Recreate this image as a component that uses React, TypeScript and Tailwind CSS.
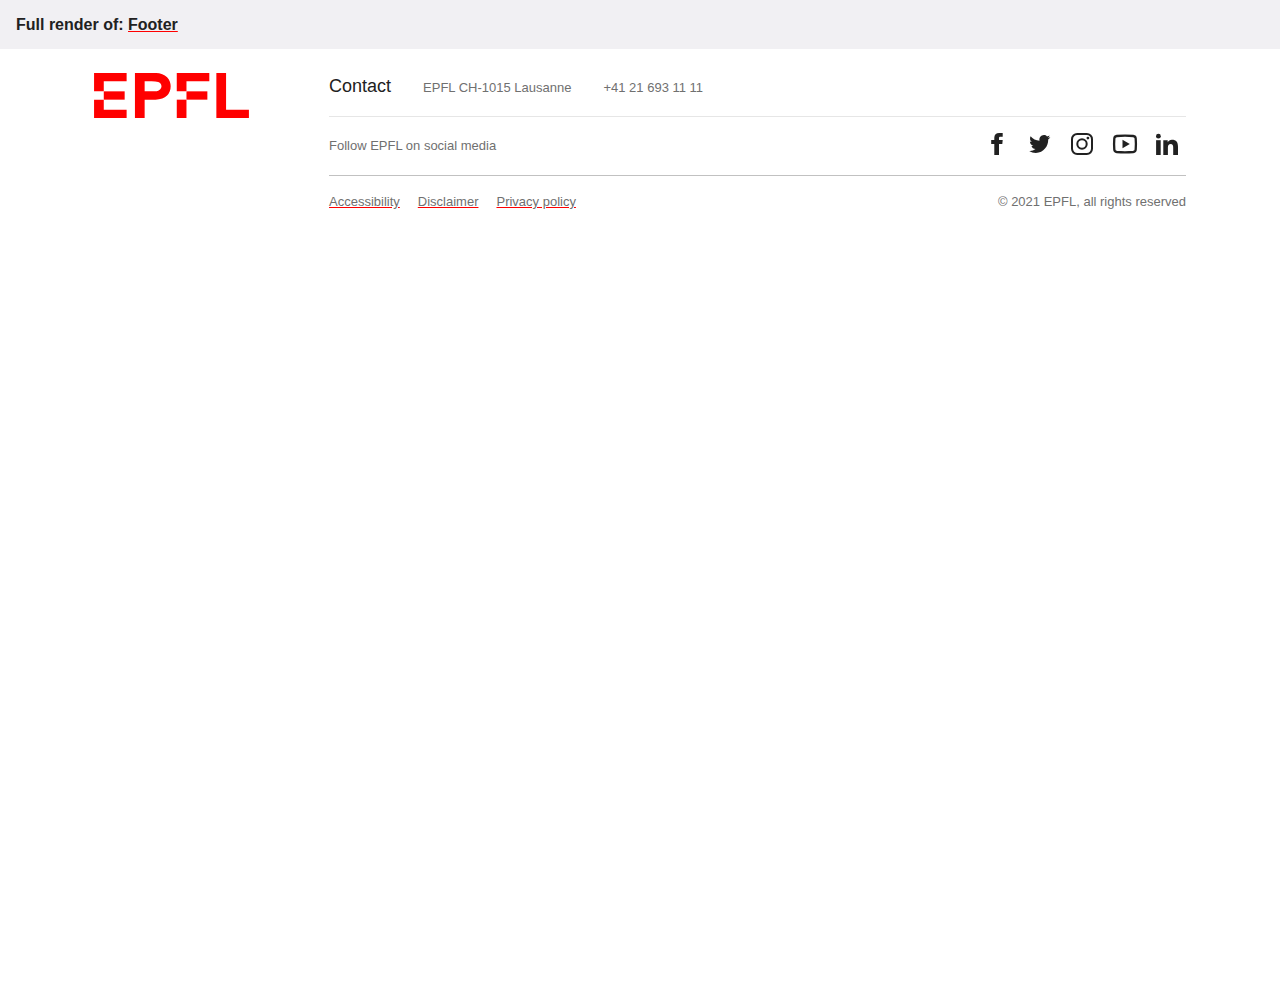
import type { ReactNode } from "react";

const contactItems = ["EPFL CH-1015 Lausanne", "+41 21 693 11 11"];
const legalLinks = ["Accessibility", "Disclaimer", "Privacy policy"];

function Logo() {
  return (
    <svg viewBox="0 0 182.4 53" className="w-[155px] h-[45px] fill-[#ff0000]" aria-hidden="true">
      <path d="M0 21.6H11.43V9.8H38.34V0H0z" />
      <path d="M0 53H38.34V43.2H11.43V31.4H0z" />
      <path d="M11.43 21.6h24.61v9.8H11.43z" />
      <path d="M86,4.87a16.12,16.12,0,0,0-5.68-3.53A23.76,23.76,0,0,0,71.82,0H48.14V53H59.57V31.4H71.82a23.76,23.76,0,0,0,8.46-1.34A16.12,16.12,0,0,0,86,26.53a13.43,13.43,0,0,0,3.19-5,17.38,17.38,0,0,0,0-11.62A13.52,13.52,0,0,0,86,4.87ZM78,19.2a6,6,0,0,1-2.42,1.58,14.85,14.85,0,0,1-3.51.69q-2,.13-4.19.13H59.57V9.8h8.27q2.22,0,4.19.13a14.31,14.31,0,0,1,3.51.7A5.79,5.79,0,0,1,78,12.2a5.55,5.55,0,0,1,0,7Z" />
      <path d="M97.4 21.6H108.83V9.8H135.74V0H97.4z" />
      <path d="M97.4 31.4h11.43V53H97.4z" />
      <path d="M108.83 21.6h24.61v9.8h-24.61z" />
      <path d="M155.47 0H144.04V53H182.38V43.2H155.47z" />
    </svg>
  );
}

const socials: { name: string; icon: ReactNode }[] = [
  {
    name: "Facebook",
    icon: (
      <svg viewBox="0 0 26 24" className="w-[26px] h-6 fill-current" aria-hidden="true">
        <path d="M18.7 1.100v3.700h-2.200c-1.300 0-1.500.5-1.500 1.500v1.800h3.700l-.4 3.900H15V23h-4.700V12H7.200V8.100h3.100V5.800C10.300 2.800 12 1 15.200 1z" />
      </svg>
    ),
  },
  {
    name: "Twitter",
    icon: (
      <svg viewBox="0 0 24 24" className="w-6 h-6 fill-current" aria-hidden="true">
        <path d="M22.3 5.2c-.6.9-1.3 1.6-2.1 2.2v.6c0 5.8-4.3 12.9-12.4 12.9-2.4 0-4.7-.7-6.6-2 2.3.2 4.5-.4 6.3-1.8-1.900 0-3.500-1.300-4-3.100.7.1 1.300.1 1.900-.1-2-.4-3.500-2.200-3.500-4.300.6.3 1.300.5 2 .5C2 8.900 1.500 6.200 2.600 4.200c2.200 2.600 5.300 4.300 8.900 4.500C10.900 5.900 13 3.100 15.900 3.100c1.200 0 2.400.5 3.100 1.300 1-.2 1.900-.5 2.700-1-.3 1-1 1.800-1.900 2.300.9-.1 1.700-.2 2.500-.5z" />
      </svg>
    ),
  },
  {
    name: "Instagram",
    icon: (
      <svg viewBox="0 0 24 24" className="w-6 h-6 fill-none stroke-current" aria-hidden="true">
        <rect x="2" y="2" width="20" height="20" rx="5.2" strokeWidth="2" />
        <circle cx="12" cy="12" r="4.7" strokeWidth="2" />
        <circle cx="17.9" cy="6.1" r="1.4" className="fill-current" stroke="none" />
      </svg>
    ),
  },
  {
    name: "YouTube",
    icon: (
      <svg viewBox="0 0 26 24" className="w-[26px] h-6 fill-none stroke-current" aria-hidden="true">
        <path
          d="M13 3.7c3 0 6 .1 8.2.3 1.500.2 2.400 1 2.500 2.500.3 3.700.3 7.300 0 11-.1 1.500-1 2.300-2.500 2.500-5.500.4-10.900.4-16.400 0-1.500-.2-2.400-1-2.500-2.500-.3-3.700-.3-7.300 0-11C2.400 5 3.300 4.200 4.800 4c2.200-.2 5.200-.3 8.200-.3z"
          strokeWidth="2.3"
        />
        <path d="M10.5 7.8v8.400l7.300-4.200z" className="fill-current" stroke="none" />
      </svg>
    ),
  },
  {
    name: "LinkedIn",
    icon: (
      <svg viewBox="0 0 22 24" className="w-[22px] h-6 fill-current" aria-hidden="true">
        <circle cx="2.4" cy="4.2" r="2.4" />
        <path d="M.1 8.200h4.600V23H.1z" />
        <path d="M7.300 8.200h4.400v2c.8-1.400 2.200-2.400 4.200-2.400 4.400 0 6.100 2.600 6.100 7V23h-4.800v-7.300c0-2.200-.6-3.600-2.500-3.600-2 0-2.800 1.400-2.800 3.600V23H7.300z" />
      </svg>
    ),
  },
];

export default function App() {
  return (
    <div className="font-['Liberation_Sans',Arial,sans-serif] text-[13px] leading-5 text-[#707070]">
      <header className="bg-[#f1f0f3] px-4 pt-[13px] pb-3">
        <h1 className="text-base leading-6 font-bold text-[#212121]">
          Full render of:{" "}
          <a href="#footer" className="underline decoration-[#ff0000] underline-offset-1">
            Footer
          </a>
        </h1>
      </header>

      <footer id="footer" className="mx-auto flex max-w-[1140px] px-6 pt-6">
        <div className="w-[235px] shrink-0">
          <a href="#home" aria-label="EPFL home" className="inline-block">
            <Logo />
          </a>
        </div>

        <div className="min-w-0 flex-1">
          <address className="flex flex-wrap items-baseline gap-x-8 border-b border-[#e6e6e6] pb-[17px] not-italic">
            <h2 className="text-lg leading-[26px] text-[#212121]">Contact</h2>
            {contactItems.map((item) => (
              <span key={item}>{item}</span>
            ))}
          </address>

          <div className="flex items-end justify-between border-b border-[#c1c1c1] pt-[15px] pb-[19px]">
            <p>Follow EPFL on social media</p>
            <ul className="flex gap-0.5 text-[#212121]">
              {socials.map(({ name, icon }) => (
                <li key={name}>
                  <a href={`#${name.toLowerCase()}`} aria-label={name} className="block px-2">
                    {icon}
                  </a>
                </li>
              ))}
            </ul>
          </div>

          <div className="flex flex-wrap items-center justify-between pt-4">
            <nav aria-label="Legal" className="flex gap-[18px]">
              {legalLinks.map((label) => (
                <a key={label} href="#legal" className="underline decoration-[#ff0000]">
                  {label}
                </a>
              ))}
            </nav>
            <p>© 2021 EPFL, all rights reserved</p>
          </div>
        </div>
      </footer>
    </div>
  );
}
